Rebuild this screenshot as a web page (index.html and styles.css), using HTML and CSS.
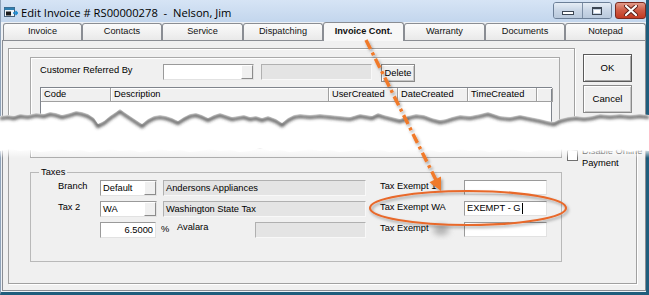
FILE: index.html
```html
<!DOCTYPE html>
<html>
<head>
<meta charset="utf-8">
<link rel="stylesheet" href="styles.css">
</head>
<body>
<div class="window">
  <div class="titlebar">
    <svg class="app-icon" width="14" height="13" viewBox="0 0 14 13">
      <rect x="0.5" y="1.5" width="10" height="9" fill="#eef3f8" stroke="#46607a"/>
      <rect x="0.5" y="1.5" width="10" height="2.5" fill="#2f7fb0"/>
      <rect x="2" y="5.5" width="5" height="4" fill="#1b1b1b"/>
      <path d="M9 7 L13.5 7 M11.5 5 L13.5 7 L11.5 9" stroke="#1d8ad0" stroke-width="1.4" fill="none"/>
    </svg>
    <span class="title">Edit Invoice # RS00000278&nbsp; - &nbsp;Nelson, Jim</span>
    <div class="controls">
      <div class="ctl-group">
        <div class="ctl ctl-min"><span class="min-bar"></span></div>
        <div class="ctl ctl-max"><span class="max-box"></span></div>
      </div>
      <div class="ctl-close">
        <svg width="14" height="11" viewBox="0 0 14 11">
          <path d="M2 1 L12 10 M12 1 L2 10" stroke="#5a1f18" stroke-width="4" stroke-linecap="round"/>
          <path d="M2 1 L12 10 M12 1 L2 10" stroke="#ffffff" stroke-width="2.2" stroke-linecap="round"/>
        </svg>
      </div>
    </div>
  </div>

  <div class="tabs">
    <div class="tab w79">Invoice</div>
    <div class="tab w80">Contacts</div>
    <div class="tab w81">Service</div>
    <div class="tab w80">Dispatching</div>
    <div class="tab tab-active w81">Invoice Cont.</div>
    <div class="tab w81">Warranty</div>
    <div class="tab w80">Documents</div>
    <div class="tab w81">Notepad</div>
  </div>

  <div class="page">
    <div class="top-area">
      <div class="panel-top">
        <div class="box-top">
          <div class="ref-row">
            <span class="ref-label">Customer Referred By</span>
            <div class="combo combo-ref"><span class="combo-text"></span><span class="drop-btn"></span></div>
            <div class="field-gray gray-ref"></div>
            <div class="btn btn-delete">Delete</div>
          </div>
          <div class="grid">
            <div class="grid-head">
              <div class="hcell c-code">Code</div>
              <div class="hcell c-desc">Description</div>
              <div class="hcell c-user">UserCreated</div>
              <div class="hcell c-date">DateCreated</div>
              <div class="hcell c-time">TimeCreated</div>
              <div class="hcell c-rest"></div>
            </div>
            <div class="grid-body"></div>
          </div>
        </div>
      </div>
      <div class="buttons">
        <div class="btn btn-big btn-ok">OK</div>
        <div class="btn btn-big btn-cancel">Cancel</div>
      </div>
    </div>

    <div class="gap-area"></div>

    <div class="bottom-area">
      <div class="panel-bottom">
        <div class="end-row">
          <div class="box-end"></div>
          <div class="check-group">
            <span class="checkbox"></span>
            <span class="check-label">Disable Online<br>Payment</span>
          </div>
        </div>
        <fieldset class="taxes">
          <legend>Taxes</legend>
          <div class="tax-row">
            <span class="tlabel">Branch</span>
            <div class="combo combo-tax"><span class="combo-text">Default</span><span class="drop-btn"></span></div>
            <div class="field-gray gray-tax">Andersons Appliances</div>
            <span class="xlabel">Tax Exempt 1</span>
            <div class="input-white"></div>
          </div>
          <div class="tax-row">
            <span class="tlabel">Tax 2</span>
            <div class="combo combo-tax"><span class="combo-text">WA</span><span class="drop-btn"></span></div>
            <div class="field-gray gray-tax">Washington State Tax</div>
            <span class="xlabel">Tax Exempt WA</span>
            <div class="input-white">EXEMPT - G<span class="caret"></span></div>
          </div>
          <div class="tax-row">
            <span class="tlabel"></span>
            <div class="input-rate">6.5000</div>
            <span class="pct">%</span>
            <span class="avalara">Avalara</span>
            <div class="field-gray gray-avalara"></div>
            <span class="xlabel">Tax Exempt</span>
            <div class="input-white"></div>
          </div>
        </fieldset>
      </div>
    </div>
  </div>

  <svg class="overlay" width="649" height="295" viewBox="0 0 649 295">
    <defs>
      <clipPath id="tearClip">
        <polygon points="0,116 8,115 14,116 20,114 28,115 36,113 44,114 50,112 56,113 62,115 70,113 76,111 82,112 88,114 94,118 98,124 104,121 110,116 116,112 120,109 124,112 130,116 136,120 142,124 148,119 154,116 160,115 166,116 172,118 178,121 184,117 190,114 196,113 202,115 208,118 214,115 220,113 226,115 232,117 238,116 244,115 250,117 256,116 262,118 268,116 276,119 282,123 288,118 294,115 300,114 310,115 320,114 330,115 340,116 350,117 360,114 372,116 378,113 384,115 392,117 400,119 408,116 416,114 424,115 432,118 440,120 446,119 452,117 460,115 470,116 480,114 488,112 494,114 500,116 510,117 520,115 530,117 540,119 548,121 554,122 560,119 568,117 576,116 584,117 592,116 600,114 610,115 620,114 630,115 640,114 649,115 649,151 640,150 630,152 620,149 612,151 600,150 590,152 580,150 570,151 560,149 550,151 540,150 530,152 520,151 510,149 500,151 490,152 480,150 470,151 460,149 450,151 440,152 430,150 420,151 410,149 400,151 390,152 380,150 370,151 360,149 350,151 340,152 330,150 320,151 310,149 300,151 290,152 280,150 270,151 260,148 250,151 240,152 230,150 220,151 210,149 200,151 190,152 180,150 170,151 160,149 150,151 140,152 130,150 120,151 110,149 100,151 90,152 80,150 70,151 60,149 50,151 40,152 30,150 20,151 10,149 0,151"/>
      </clipPath>
      <filter id="blur2" x="-10%" y="-50%" width="120%" height="200%">
        <feGaussianBlur stdDeviation="1.6"/>
      </filter>
      <filter id="blur3" x="-50%" y="-50%" width="200%" height="200%">
        <feGaussianBlur stdDeviation="3"/>
      </filter>
      <filter id="ds" x="-20%" y="-20%" width="140%" height="140%">
        <feDropShadow dx="1.5" dy="2" stdDeviation="1.5" flood-color="#000" flood-opacity="0.35"/>
      </filter>
      <linearGradient id="fade" x1="0" y1="0" x2="0" y2="1">
        <stop offset="0" stop-color="#fff" stop-opacity="0.95"/>
        <stop offset="1" stop-color="#fff" stop-opacity="0"/>
      </linearGradient>
    </defs>
    <!-- torn paper gap -->
    <rect x="0" y="100" width="649" height="60" fill="#ffffff" clip-path="url(#tearClip)"/>
    <g clip-path="url(#tearClip)">
      <polyline transform="translate(0,2.5)" filter="url(#blur2)" fill="none" stroke="#333333" stroke-opacity="0.8" stroke-width="3.2" points="0,116 8,115 14,116 20,114 28,115 36,113 44,114 50,112 56,113 62,115 70,113 76,111 82,112 88,114 94,118 98,124 104,121 110,116 116,112 120,109 124,112 130,116 136,120 142,124 148,119 154,116 160,115 166,116 172,118 178,121 184,117 190,114 196,113 202,115 208,118 214,115 220,113 226,115 232,117 238,116 244,115 250,117 256,116 262,118 268,116 276,119 282,123 288,118 294,115 300,114 310,115 320,114 330,115 340,116 350,117 360,114 372,116 378,113 384,115 392,117 400,119 408,116 416,114 424,115 432,118 440,120 446,119 452,117 460,115 470,116 480,114 488,112 494,114 500,116 510,117 520,115 530,117 540,119 548,121 554,122 560,119 568,117 576,116 584,117 592,116 600,114 610,115 620,114 630,115 640,114 649,115"/>
    </g>
    <rect x="0" y="149" width="649" height="9" fill="url(#fade)"/>

    <!-- annotation -->
    <ellipse cx="441" cy="230" rx="8" ry="5" fill="#777" opacity="0.55" filter="url(#blur3)"/>
    <g filter="url(#ds)">
      <line x1="366" y1="40" x2="436" y2="180" stroke="#f07a2c" stroke-width="3.5" stroke-dasharray="10 4 3 4"/>
      <polygon points="441,191 429.4,182.3 441,176.5" fill="#f07a2c"/>
      <ellipse cx="468" cy="208" rx="98" ry="17" fill="none" stroke="#e8692c" stroke-width="2.2"/>
    </g>
  </svg>
</div>
</body>
</html>
```

FILE: styles.css
```css
* { box-sizing: border-box; }

body {
  margin: 0;
  width: 649px;
  height: 295px;
  overflow: hidden;
  font-family: "Liberation Sans", Arial, sans-serif;
  font-size: 9.3px;
  color: #000;
  background: #ffffff;
}

.window {
  position: relative;
  width: 649px;
  height: 295px;
  background: #eef1f5;
  border-left: 1px solid #8fa2b8;
  border-right: 3px solid #1f5d7c;
  border-bottom: 3px solid #1f5d7c;
  padding-left: 1px;
  padding-bottom: 1px;
  display: flex;
  flex-direction: column;
}

/* ---------- title bar ---------- */
.titlebar {
  height: 22px;
  margin-left: -1px;
  display: flex;
  align-items: flex-start;
  background: linear-gradient(#d6e4f5, #c3d6ed);
  flex: none;
}
.app-icon { margin: 6px 0 0 3px; flex: none; }
.title {
  margin: 5px 0 0 3px;
  font-family: "Open Sans", "Noto Sans", sans-serif;
  font-size: 11.2px;
  line-height: 15px;
  color: #000;
  white-space: nowrap;
}
.controls {
  margin-left: auto;
  margin-top: 2px;
  display: flex;
  gap: 3px;
}
.ctl-group {
  display: flex;
  border: 1px solid #6c7f97;
  border-radius: 3px;
  overflow: hidden;
}
.ctl {
  width: 28px;
  height: 15px;
  background: linear-gradient(#e6edf5, #c9d6e6 50%, #b9c9dc);
  display: flex;
  align-items: center;
  justify-content: center;
}
.ctl-min { border-right: 1px solid #7d8fa6; width: 29px; }
.min-bar {
  width: 12px;
  height: 4px;
  margin-top: 4px;
  background: #ffffff;
  border: 1px solid #3c4653;
}
.max-box {
  width: 10px;
  height: 8px;
  background: #ffffff;
  border: 1px solid #3c4653;
  border-top-width: 2px;
  box-shadow: inset 0 0 0 1px #c7d3e2;
}
.ctl-close {
  width: 31px;
  height: 17px;
  border: 1px solid #7a2a20;
  border-radius: 3px;
  background: linear-gradient(#e19a8a, #cf5a44 50%, #c23a22);
  display: flex;
  align-items: center;
  justify-content: center;
}

/* ---------- tabs ---------- */
.tabs {
  height: 18px;
  display: flex;
  align-items: flex-end;
  padding-left: 1px;
  flex: none;
  position: relative;
  z-index: 2;
}
.tab {
  height: 17px;
  border: 1px solid #8a8d93;
  border-bottom: none;
  border-radius: 3px 3px 0 0;
  background: linear-gradient(#fbfbfb, #e9e9e9);
  text-align: center;
  font-size: 9.2px;
  line-height: 15px;
  color: #111;
}
.w79 { width: 79px; }
.w80 { width: 80px; }
.w81 { width: 81px; }
.tab-active {
  height: 19px;
  margin-bottom: -1px;
  background: #f7f7f7;
  font-weight: bold;
  line-height: 17px;
}

/* ---------- page ---------- */
.page {
  height: 251px;
  border: 1px solid #8a8d93;
  background: #f0f0f0;
  display: flex;
  flex-direction: column;
  flex: none;
}

.top-area {
  height: 84px;
  overflow: hidden;
  display: flex;
  align-items: flex-start;
  flex: none;
}
.panel-top {
  margin: 7px 0 0 5px;
  width: 567px;
  height: 110px;
  border: 1px solid #a0a0a0;
  box-shadow: inset 1px 1px #ffffff, 1px 1px #ffffff;
  flex: none;
}
.box-top {
  margin: 8px 0 0 21px;
  width: 530px;
  height: 120px;
  border: 1px solid #a9a9a9;
  box-shadow: inset 1px 1px #ffffff;
  padding: 6px 0 0 9px;
}
.ref-row {
  display: flex;
  align-items: flex-start;
  height: 18px;
}
.ref-label {
  width: 123px;
  line-height: 13px;
  flex: none;
}
.combo {
  height: 16px;
  background: #ffffff;
  border: 1px solid;
  border-color: #9a9a9a #e2e2e2 #e2e2e2 #9a9a9a;
  display: flex;
  flex: none;
}
.combo-text {
  flex: 1;
  padding-left: 2px;
  line-height: 14px;
}
.drop-btn {
  width: 12px;
  height: 14px;
  background: #f0f0f0;
  border: 1px solid;
  border-color: #ffffff #8c8c8c #8c8c8c #ffffff;
  flex: none;
}
.combo-ref { width: 91px; }
.field-gray {
  height: 16px;
  background: #e4e4e4;
  border: 1px solid;
  border-color: #b0b0b0 #f8f8f8 #f8f8f8 #b0b0b0;
  padding-left: 2px;
  line-height: 14px;
  flex: none;
  white-space: nowrap;
  overflow: hidden;
}
.gray-ref { width: 111px; margin-left: 7px; }
.btn {
  background: #f0f0f0;
  border: 1px solid #8a8a8a;
  box-shadow: inset 1px 1px #ffffff, inset -1px -1px #c6c6c6;
  text-align: center;
  flex: none;
}
.btn-delete {
  width: 34px;
  height: 18px;
  margin-left: 9px;
  line-height: 16px;
}

.grid {
  margin-top: 5px;
  width: 512px;
  border: 1px solid #7f848c;
  background: #ffffff;
}
.grid-head {
  display: flex;
  height: 14px;
  background: #f0f0f0;
}
.hcell {
  height: 14px;
  border-right: 1px solid #a0a0a0;
  border-bottom: 1px solid #a0a0a0;
  box-shadow: inset 1px 1px #ffffff;
  padding-left: 3px;
  line-height: 13px;
  flex: none;
  white-space: nowrap;
}
.c-code { width: 70px; }
.c-desc { width: 218px; }
.c-user { width: 69px; }
.c-date { width: 70px; }
.c-time { width: 69px; }
.c-rest { width: 16px; }
.grid-body { height: 60px; }

.buttons {
  margin: 13px 0 0 8px;
  display: flex;
  flex-direction: column;
  gap: 3px;
}
.btn-big {
  width: 49px;
  height: 28px;
  line-height: 26px;
  font-size: 9.6px;
}
.btn-ok {
  border-color: #5a5a5a;
  box-shadow: inset 1px 1px #ffffff, inset -1px -1px #a8a8a8;
}

.gap-area {
  height: 15px;
  background: #ffffff;
  flex: none;
}

/* ---------- bottom ---------- */
.bottom-area {
  height: 149px;
  flex: none;
}
.panel-bottom {
  margin: 0 8px 0 5px;
  height: 144px;
  border: 1px solid #a0a0a0;
  border-top: none;
  box-shadow: 1px 1px #ffffff;
}
.end-row {
  display: flex;
  height: 18px;
  align-items: flex-start;
}
.box-end {
  margin-left: 21px;
  width: 532px;
  height: 18px;
  border: 1px solid #a9a9a9;
  border-top: none;
  box-shadow: inset 1px 0 #ffffff;
  flex: none;
}
.check-group {
  margin: 5px 0 0 5px;
  display: flex;
  align-items: flex-start;
  flex: none;
}
.checkbox {
  width: 11px;
  height: 11px;
  margin-top: 5px;
  background: #ffffff;
  border: 1px solid #707070;
  flex: none;
}
.check-label {
  margin-left: 4px;
  line-height: 12px;
  white-space: nowrap;
}

.taxes {
  margin: 8px 0 0 21px;
  width: 532px;
  padding: 2px 0 23px 8px;
  border: 1px solid #b9b9b9;
  min-width: 0;
}
.taxes legend {
  padding: 0 2px;
  line-height: 12px;
  font-size: 9.3px;
}
.tax-row {
  display: flex;
  align-items: flex-start;
  height: 16px;
  margin-left: 19px;
  margin-bottom: 5px;
}
.tax-row:last-child { margin-bottom: 0; }
.tlabel {
  width: 42px;
  line-height: 13px;
  flex: none;
}
.combo-tax { width: 57px; }
.gray-tax { width: 203px; margin-left: 6px; }
.xlabel {
  width: 84px;
  margin-left: 14px;
  line-height: 13px;
  flex: none;
  white-space: nowrap;
}
.input-white {
  width: 83px;
  height: 15px;
  background: #ffffff;
  border: 1px solid;
  border-color: #9a9a9a #e2e2e2 #e2e2e2 #9a9a9a;
  padding-left: 2px;
  line-height: 13px;
  flex: none;
  display: flex;
  align-items: center;
}
.caret {
  width: 1px;
  height: 11px;
  margin-left: 1px;
  background: #000;
}
.input-rate {
  width: 56px;
  height: 16px;
  background: #ffffff;
  border: 1px solid;
  border-color: #9a9a9a #e2e2e2 #e2e2e2 #9a9a9a;
  text-align: right;
  padding-right: 2px;
  line-height: 14px;
  flex: none;
}
.pct {
  width: 16px;
  margin-left: 5px;
  line-height: 15px;
  flex: none;
}
.avalara {
  width: 78px;
  line-height: 11px;
  flex: none;
}
.gray-avalara { width: 111px; }

/* ---------- overlay (torn paper + annotation) ---------- */
.overlay {
  position: absolute;
  left: -1px;
  top: 0;
  pointer-events: none;
  z-index: 5;
}
```
